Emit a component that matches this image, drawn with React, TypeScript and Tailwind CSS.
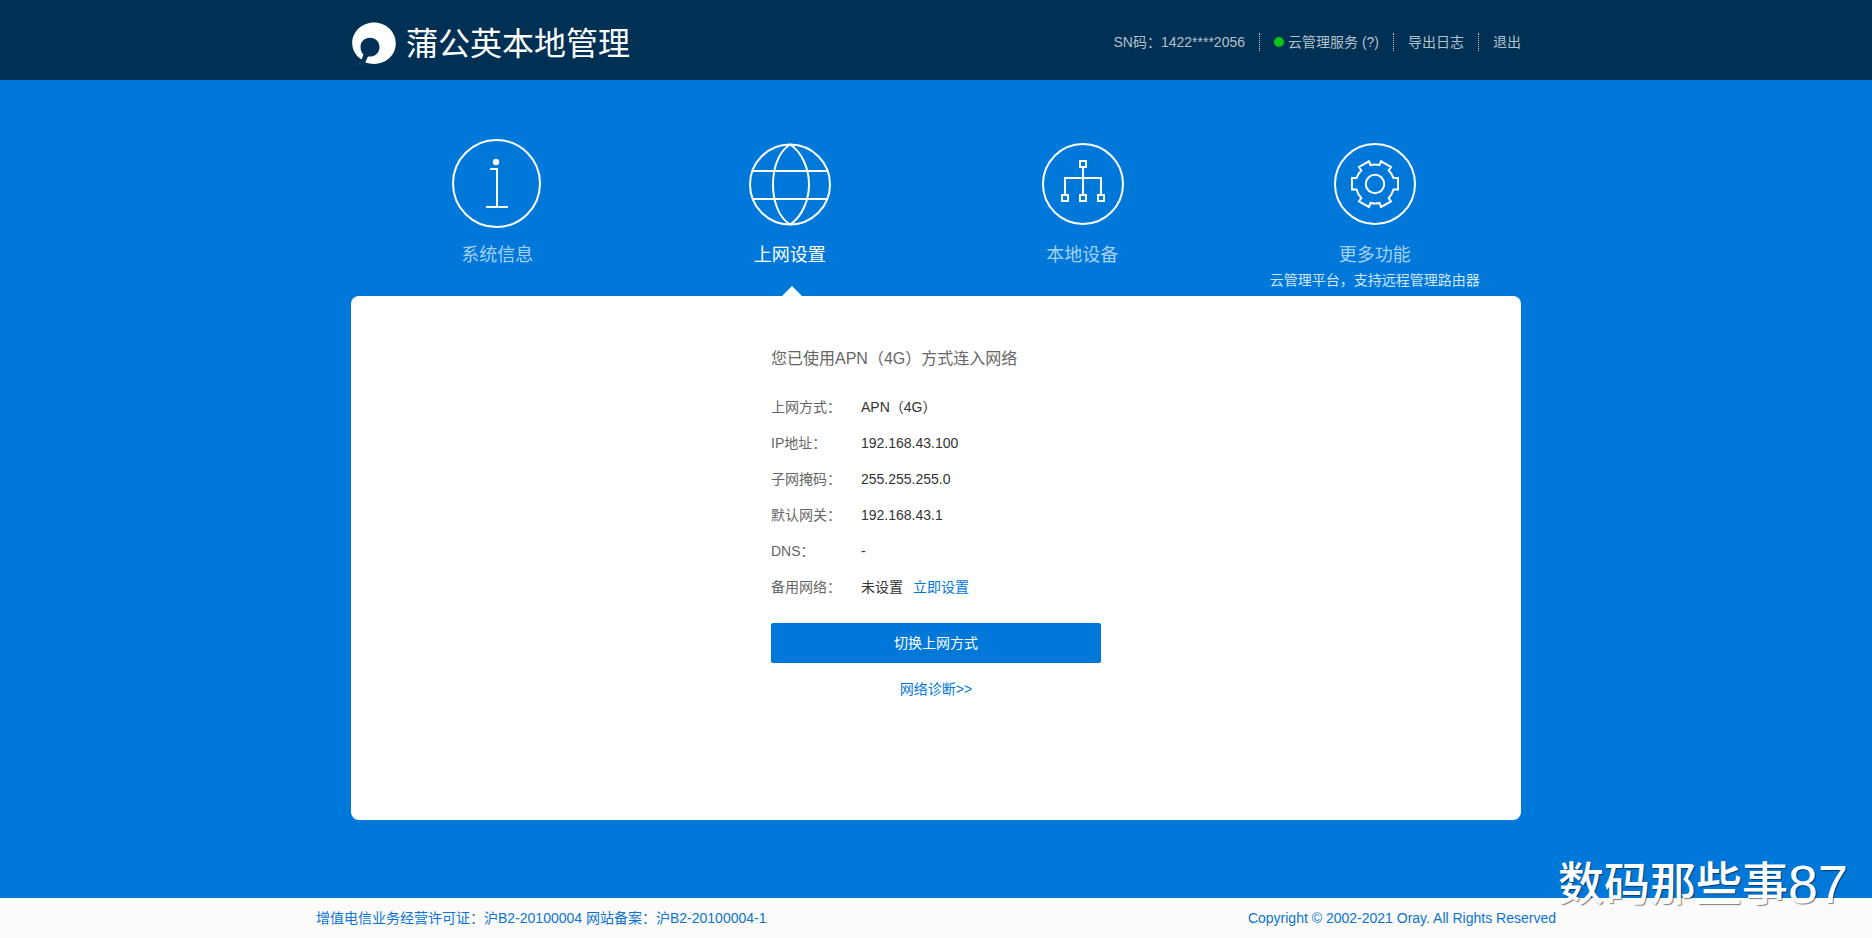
import type { ReactNode } from "react";

type Tab = { label: string; icon: ReactNode; note?: string; active?: boolean };
type Row = { label: string; value: string; action?: string };

function Logo() {
  return (
    <svg width="45" height="44" viewBox="-1 0 45 44" aria-hidden="true">
      <path
        fill="#fff"
        d="M22 0.5C34.2 0.5 43.8 9.8 43.8 21.3C43.8 33 34.2 42 22 42C18.8 42 15.9 41.4 13.2 40.3L16 34.4C21.500 35.500 27.500 31.500 27.500 25.200C27.500 19.800 23.500 15.800 18 15.800C12.500 15.800 8.500 19.800 8.500 25C8.500 28.500 9.800 30.800 11.400 32.400L9.600 37.500C3.800 34 0.200 28 0.200 21.300C0.200 9.800 9.800 0.500 22 0.500Z"
      />
      <circle cx="8" cy="42" r="0.7" fill="#fff" opacity="0.4" />
    </svg>
  );
}

function InfoIcon() {
  return (
    <svg width="90" height="90" viewBox="0 0 90 90" fill="none" stroke="#fff" strokeWidth="2" aria-hidden="true">
      <circle cx="44.500" cy="45.500" r="43.500" />
      <circle cx="44" cy="24" r="3.200" fill="#fff" stroke="none" />
      <path d="M38 31H45V68.500M34 69H56" />
    </svg>
  );
}

function GlobeIcon() {
  return (
    <svg width="90" height="90" viewBox="0 0 90 90" fill="none" stroke="#fff" strokeWidth="2" aria-hidden="true">
      <circle cx="45" cy="46.500" r="40" />
      <path d="M7.500 33H82.500M7.500 61H82.500" />
      <path d="M45 6.500C33 14 28 31 28 46.500S33 79 45 86.500C57 79 64 62 64 46.500S57 14 45 6.500Z" />
    </svg>
  );
}

function DevicesIcon() {
  return (
    <svg width="90" height="90" viewBox="0 0 90 90" fill="none" stroke="#fff" strokeWidth="2" aria-hidden="true">
      <circle cx="46" cy="46" r="40" />
      <path d="M43 23H49V29H43ZM25 57H31V63H25ZM43 57H49V63H43ZM61 57H67V63H61Z" />
      <path d="M46 29V57M28 57V40H64V57" />
    </svg>
  );
}

function GearIcon() {
  return (
    <svg width="90" height="90" viewBox="0 0 90 90" fill="none" stroke="#fff" strokeWidth="2" aria-hidden="true">
      <circle cx="45" cy="46" r="40" />
      <circle cx="45" cy="46" r="9.200" />
      <path d="M39 23.300L40.500 27Q45 26 49.500 27L51 23.300L61 29L58.700 32.500Q62 35.500 63.500 40H68V51.500H63.500Q62 56.500 58.700 60L61 63.500L51 69L49.500 65Q45 66 40.500 65L39 69L29 63.500L31.300 60Q28 56.500 26.500 51.500H22V40H26.500Q28 35.500 31.300 32.500L29 29Z" />
    </svg>
  );
}

const tabs: Tab[] = [
  { label: "系统信息", icon: <InfoIcon /> },
  { label: "上网设置", icon: <GlobeIcon />, active: true },
  { label: "本地设备", icon: <DevicesIcon /> },
  { label: "更多功能", icon: <GearIcon />, note: "云管理平台，支持远程管理路由器" },
];

const rows: Row[] = [
  { label: "上网方式：", value: "APN（4G）" },
  { label: "IP地址：", value: "192.168.43.100" },
  { label: "子网掩码：", value: "255.255.255.0" },
  { label: "默认网关：", value: "192.168.43.1" },
  { label: "DNS：", value: "-" },
  { label: "备用网络：", value: "未设置", action: "立即设置" },
];

function Divider() {
  return <span className="mx-3.5 h-[18px] border-l border-dotted border-[#c9d3dc]" />;
}

export default function App() {
  return (
    <div
      lang="zh-CN"
      className="relative flex min-h-screen flex-col bg-[#0078d9] font-['Liberation_Sans','Noto_Sans_CJK_SC',sans-serif] text-sm"
    >
      <header className="bg-[#003054]">
        <div className="mx-auto flex h-20 max-w-[1170px] items-start justify-between">
          <div className="flex items-center gap-2.5 pt-[22px]">
            <Logo />
            <h1 className="text-[32px] leading-10 text-white">蒲公英本地管理</h1>
          </div>
          <nav className="flex items-center pt-8 text-[#b3c1cd]">
            <span>SN码：1422****2056</span>
            <Divider />
            <a href="#cloud" className="flex items-center gap-1">
              <span className="size-2.5 rounded-full bg-[#0bc416]" />
              云管理服务 (?)
            </a>
            <Divider />
            <a href="#log">导出日志</a>
            <Divider />
            <a href="#logout">退出</a>
          </nav>
        </div>
      </header>

      <main className="mx-auto w-full max-w-[1170px] grow pb-[78px]">
        <nav className="grid h-[216px] grid-cols-4 pt-[58px]">
          {tabs.map((tab) => (
            <a
              key={tab.label}
              href={"#" + tab.label}
              className={
                tab.active
                  ? "relative flex flex-col items-center text-white"
                  : "relative flex flex-col items-center text-[#a6d0f3]"
              }
            >
              {tab.icon}
              <span className="mt-3.5 text-lg leading-[26px]">{tab.label}</span>
              {tab.note && <span className="leading-6 text-[#cce4f7]">{tab.note}</span>}
              {tab.active && (
                <svg className="absolute bottom-0 left-1/2 -ml-2" width="20" height="10" viewBox="0 0 20 10" aria-hidden="true">
                  <path d="M0 10L10 0L20 10Z" fill="#fff" />
                </svg>
              )}
            </a>
          ))}
        </nav>

        <section className="min-h-[524px] rounded-lg bg-white pt-[49px]">
          <div className="mx-auto w-[330px]">
            <h2 className="text-base leading-7 text-[#666]">您已使用APN（4G）方式连入网络</h2>
            <dl className="mt-4">
              {rows.map((row) => (
                <div key={row.label} className="flex h-9 items-center">
                  <dt className="w-[90px] text-[#666]">{row.label}</dt>
                  <dd className="flex gap-2.5 text-[#333]">
                    {row.value}
                    {row.action && (
                      <a href="#backup" className="text-[#0078d9]">
                        {row.action}
                      </a>
                    )}
                  </dd>
                </div>
              ))}
            </dl>
            <button type="button" className="mt-[18px] h-10 w-full rounded-xs bg-[#0078d9] text-white">
              切换上网方式
            </button>
            <a href="#diagnose" className="mt-4 block text-center text-[#0078d9]">
              网络诊断&gt;&gt;
            </a>
          </div>
        </section>
      </main>

      <footer className="bg-[#fbfbfa]">
        <div className="mx-auto flex h-10 max-w-[1240px] items-center justify-between text-[#0c73d3]">
          <p>增值电信业务经营许可证：沪B2-20100004 网站备案：沪B2-20100004-1</p>
          <p>Copyright © 2002-2021 Oray. All Rights Reserved</p>
        </div>
      </footer>

      <div className="absolute right-6 bottom-7 flex items-center leading-[52px] font-medium text-white [text-shadow:1px_1px_1px_#00000080]">
        <span className="text-[46px]">数码那些事</span>
        <span className="text-[54px] font-normal">87</span>
      </div>
    </div>
  );
}
